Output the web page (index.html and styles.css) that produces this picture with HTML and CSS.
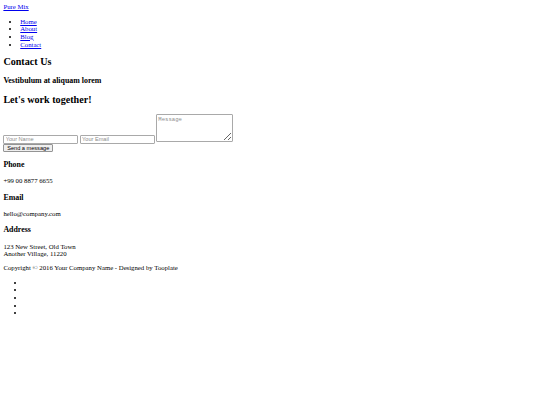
FILE: index.html
```html
<!DOCTYPE html>
<html>
<head>
<meta charset="utf-8">
<title>Pure Mix</title>
<link rel="stylesheet" href="styles.css">
</head>
<body class="body">
<div class="navbar">
  <a href="#" class="brand">Pure Mix</a>
  <ul class="nav">
    <li><a href="#">Home</a></li>
    <li><a href="#">About</a></li>
    <li><a href="#">Blog</a></li>
    <li><a href="#">Contact</a></li>
  </ul>
</div>
<section class="header">
  <h2 class="title">Contact Us</h2>
  <h3 class="subtitle">Vestibulum at aliquam lorem</h3>
</section>
<section class="contact">
  <h2 class="title">Let's work together!</h2>
  <form class="contact-form">
    <div class="fields">
      <input class="field" type="text" name="name" placeholder="Your Name">
      <input class="field" type="email" name="email" placeholder="Your Email">
      <textarea class="message" name="message" placeholder="Message"></textarea>
    </div>
    <div class="actions">
      <input class="submit" type="submit" value="Send a message">
    </div>
  </form>
  <h3 class="subtitle">Phone</h3>
  <p class="text">+99 00 8877 6655</p>
  <h3 class="subtitle">Email</h3>
  <p class="text">hello@company.com</p>
  <h3 class="subtitle">Address</h3>
  <p class="text">123 New Street, Old Town<br>Another Village, 11220</p>
</section>
<footer class="footer">
  <p class="text">Copyright © 2016 Your Company Name - Designed by Tooplate</p>
  <ul class="social">
    <li><a href="#" class="icon"></a></li>
    <li><a href="#" class="icon"></a></li>
    <li><a href="#" class="icon"></a></li>
    <li><a href="#" class="icon"></a></li>
    <li><a href="#" class="icon"></a></li>
  </ul>
</footer>
</body>
</html>
```
FILE: styles.css
```css
.body {
  margin: 3.375px;
  font-family: "Liberation Serif", "Times New Roman", serif;
  font-size: 6.75px;
  line-height: 7.6px;
  color: #000;
  background: #fff;
}
.nav,
.social {
  margin: 6.75px 0;
  padding-left: 16.875px;
}
.social {
  padding-left: 21.9px;
}
.brand,
.nav a {
  color: #0000ee;
}
.title {
  font-size: 10.125px;
  line-height: 11.4px;
  margin: 8.4px 0;
}
.subtitle {
  font-size: 7.9px;
  line-height: 9.2px;
  margin: 7.9px 0;
}
.text {
  margin: 6.75px 0;
}
.fields {
  display: flex;
  align-items: flex-end;
  column-gap: 1.4px;
}
.actions {
  display: flex;
  padding-top: 0.4px;
}
.field,
.message,
.submit {
  font-family: "Liberation Sans", Arial, sans-serif;
  font-size: 5.625px;
  line-height: normal;
  box-sizing: border-box;
  margin: 0;
  border-radius: 1px;
}
.field {
  width: 75px;
  height: 9px;
  padding: 0 1.3px;
  border: 1px solid #a9a9a9;
  background: #fff;
  color: #000;
}
.field::placeholder,
.message::placeholder {
  color: #8d8d8d;
}
.message {
  font-family: "Liberation Mono", "Courier New", monospace;
  width: 77px;
  height: 28px;
  margin-bottom: 2.3px;
  padding: 1px 1.2px;
  border: 1px solid #a9a9a9;
  resize: both;
}
.submit {
  width: 49.7px;
  height: 8px;
  padding: 0 1.5px;
  border: 1px solid #949494;
  background: #efefef;
  color: #000;
}
```
